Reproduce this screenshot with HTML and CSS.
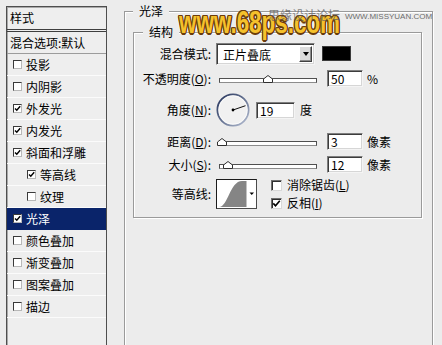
FILE: index.html
```html
<!DOCTYPE html>
<html lang="zh">
<head>
<meta charset="utf-8">
<title>图层样式 - 光泽</title>
<link rel="stylesheet" href="styles.css">
</head>
<body>
<div class="dialog">
  <div class="styles-panel">
    <div class="panel-title">样式</div>
    <div class="item blend">混合选项:默认</div>
    <div class="item"><span class="cb"></span><span>投影</span></div>
    <div class="item"><span class="cb"></span><span>内阴影</span></div>
    <div class="item"><span class="cb"><svg viewBox="0 0 7 7"><path d="M1 3.4 L2.8 5.3 L6.2 1.2"/></svg></span><span>外发光</span></div>
    <div class="item"><span class="cb"><svg viewBox="0 0 7 7"><path d="M1 3.4 L2.8 5.3 L6.2 1.2"/></svg></span><span>内发光</span></div>
    <div class="item"><span class="cb"><svg viewBox="0 0 7 7"><path d="M1 3.4 L2.8 5.3 L6.2 1.2"/></svg></span><span>斜面和浮雕</span></div>
    <div class="item sub"><span class="cb"><svg viewBox="0 0 7 7"><path d="M1 3.4 L2.8 5.3 L6.2 1.2"/></svg></span><span>等高线</span></div>
    <div class="item sub"><span class="cb"></span><span>纹理</span></div>
    <div class="item active"><span class="cb"><svg viewBox="0 0 7 7"><path d="M1 3.4 L2.8 5.3 L6.2 1.2"/></svg></span><span>光泽</span></div>
    <div class="item"><span class="cb"></span><span>颜色叠加</span></div>
    <div class="item"><span class="cb"></span><span>渐变叠加</span></div>
    <div class="item"><span class="cb"></span><span>图案叠加</span></div>
    <div class="item"><span class="cb"></span><span>描边</span></div>
  </div>

  <div class="group outer">
    <span class="caption">光泽</span>
    <div class="group inner">
      <span class="caption">结构</span>
      <div class="form">
        <div class="row r-blend">
          <label class="lbl">混合模式:</label>
          <div class="select sunken"><span class="sel-text">正片叠底</span><span class="sel-btn"><span class="arrow"></span></span></div>
          <span class="swatch"></span>
        </div>
        <div class="row r-field">
          <label class="lbl">不透明度(<u>O</u>):</label>
          <div class="slider"><span class="track"></span><svg class="thumb" style="left:50%" viewBox="0 0 10 8"><path d="M0.5 7.5 L0.5 4 L5 0.5 L9.5 4 L9.5 7.5 Z"/></svg></div>
          <span class="input sunken">50</span>
          <span class="unit">%</span>
        </div>
        <div class="row r-angle">
          <label class="lbl">角度(<u>N</u>):</label>
          <svg class="dial" width="34" height="34" viewBox="0 0 34 34">
            <defs>
              <linearGradient id="ring" x1="0" y1="0" x2="1" y2="1">
                <stop offset="0" stop-color="#24325a"/>
                <stop offset="0.55" stop-color="#6d7a98"/>
                <stop offset="1" stop-color="#b9c2d6"/>
              </linearGradient>
            </defs>
            <circle cx="17" cy="17" r="15.6" fill="#f1f1f1" stroke="url(#ring)" stroke-width="1.8"/>
            <circle cx="17" cy="17" r="14.2" fill="none" stroke="#ffffff" stroke-width="0.8" opacity="0.8"/>
            <line x1="17" y1="17" x2="29.5" y2="12.7" stroke="#111" stroke-width="1"/>
            <circle cx="17" cy="17" r="1.4" fill="#000"/>
          </svg>
          <span class="input sunken angle-input">19</span>
          <span class="unit angle-unit">度</span>
        </div>
        <div class="row r-field">
          <label class="lbl">距离(<u>D</u>):</label>
          <div class="slider"><span class="track"></span><svg class="thumb" style="left:3px" viewBox="0 0 10 8"><path d="M0.5 7.5 L0.5 4 L5 0.5 L9.5 4 L9.5 7.5 Z"/></svg></div>
          <span class="input sunken">3</span>
          <span class="unit">像素</span>
        </div>
        <div class="row r-field">
          <label class="lbl">大小(<u>S</u>):</label>
          <div class="slider"><span class="track"></span><svg class="thumb" style="left:9px" viewBox="0 0 10 8"><path d="M0.5 7.5 L0.5 4 L5 0.5 L9.5 4 L9.5 7.5 Z"/></svg></div>
          <span class="input sunken">12</span>
          <span class="unit">像素</span>
        </div>
        <div class="row r-contour">
          <label class="lbl">等高线:</label>
          <div class="contour">
            <svg width="39" height="28" viewBox="0 0 39 28">
              <path d="M2 27 C 11 27, 13 1, 25 1 L 29.5 1 L 29.5 27 Z" fill="#858585"/>
              <path d="M32.5 12.5 L37 12.5 L34.75 15 Z" fill="#000"/>
            </svg>
          </div>
          <div class="checks">
            <div class="check"><span class="cb2"></span><span class="check-text">消除锯齿(<u>L</u>)</span></div>
            <div class="check"><span class="cb2"><svg viewBox="0 0 9 9"><path d="M1.3 4.4 L3.5 6.8 L7.8 1.8"/></svg></span><span class="check-text">反相(<u>I</u>)</span></div>
          </div>
        </div>
      </div>
    </div>
  </div>
</div>

<div class="wm-68">www.68ps.com</div>
<div class="wm-cn">思缘设计论坛</div>
<div class="wm-url">WWW.MISSYUAN.COM</div>
</body>
</html>
```

FILE: styles.css
```css
* { box-sizing: border-box; }

html, body { margin: 0; }

body {
  width: 442px;
  height: 345px;
  overflow: hidden;
  position: relative;
  background: #ececec;
  color: #000;
  font: 12px/1 "Noto Sans CJK SC", "Noto Sans", sans-serif;
}

.dialog {
  display: flex;
  align-items: flex-start;
  padding: 6px 0 0 6px;
}

/* ---------- left style list ---------- */
.styles-panel {
  flex: none;
  width: 101px;
  height: 339px;
  border: 1px solid #4e4e4e;
  border-bottom: none;
  background: #eeeeee;
  box-shadow: inset 1px 1px 0 #a9a9a9;
}

.panel-title {
  height: 25px;
  line-height: 22px;
  padding-left: 3px;
  border-bottom: 3px double #3e3e3e;
}

.item {
  height: 22px;
  display: flex;
  align-items: center;
  gap: 4px;
  padding-left: 6px;
  border-bottom: 1px solid #fbfbfb;
  white-space: nowrap;
}

.item.blend {
  padding-left: 3px;
  border-bottom-color: #9c9c9c;
}

.item.sub { padding-left: 20px; }

.item.active {
  background: #0a246a;
  color: #fff;
  border-bottom-color: #0a246a;
}

.cb {
  flex: none;
  width: 9px;
  height: 9px;
  background: #fff;
  border: 1px solid;
  border-color: #3a3a3a #b8b8b8 #b8b8b8 #3a3a3a;
  display: flex;
}

.cb svg {
  width: 7px;
  height: 7px;
  fill: none;
  stroke: #000;
  stroke-width: 1.4;
}

/* ---------- group boxes ---------- */
.group {
  position: relative;
  border: 1px solid #9a9a9a;
  box-shadow: inset 1px 1px 0 #fff, 1px 1px 0 #fff;
}

.group.outer {
  flex: none;
  width: 309px;
  height: 335px;
  margin: 5px 0 0 17px;
  padding: 20px 0 0 8px;
}

.group.inner {
  width: 289px;
  height: 186px;
}

.caption {
  position: absolute;
  top: -8px;
  left: 8px;
  padding: 0 6px;
  line-height: 14px;
  background: #ececec;
}

.group.inner .caption { left: 9px; }

/* ---------- form ---------- */
.form {
  display: flex;
  flex-direction: column;
  gap: 6px;
  padding-top: 10px;
}

.row {
  display: flex;
  align-items: center;
}

.lbl {
  flex: none;
  width: 77px;
  margin-right: 5px;
  text-align: right;
  white-space: nowrap;
}

.r-blend { height: 21px; }
.r-field { height: 17px; }
.r-angle { height: 34px; }
.r-contour { height: 30px; }

.sunken {
  background: #fff;
  border: 1px solid;
  border-color: #7e7e7e #f4f4f4 #f4f4f4 #7e7e7e;
  box-shadow: inset 1px 1px 0 #3c3c3c, inset -1px -1px 0 #d6d6d6;
}

.select {
  width: 99px;
  height: 22px;
  display: flex;
  align-items: stretch;
  padding: 2px;
}

.sel-text {
  flex: 1;
  padding-left: 4px;
  line-height: 18px;
}

.sel-btn {
  flex: none;
  width: 13px;
  background: #dcdcdc;
  border: 1px solid;
  border-color: #fff #404040 #404040 #fff;
  box-shadow: inset -1px -1px 0 #8a8a8a;
  display: flex;
  align-items: center;
  justify-content: center;
}

.arrow {
  width: 0;
  height: 0;
  border-left: 3.5px solid transparent;
  border-right: 3.5px solid transparent;
  border-top: 4px solid #000;
}

.swatch {
  width: 29px;
  height: 15px;
  margin-left: 7px;
  background: #000;
  border: 1px solid #3c3c3c;
}

.slider {
  position: relative;
  flex: none;
  width: 98px;
  height: 17px;
  margin-left: 3px;
}

.track {
  position: absolute;
  left: 0;
  right: 0;
  top: 8px;
  height: 5px;
  background: #fff;
  border: 1px solid #505050;
  border-bottom-color: #8c8c8c;
}

.thumb {
  position: absolute;
  top: 5px;
  width: 10px;
  height: 8px;
  margin-left: -5px;
  overflow: visible;
  fill: #fff;
  stroke: #303030;
  stroke-width: 1;
}

.input {
  flex: none;
  width: 36px;
  height: 17px;
  margin-left: 10px;
  padding-left: 3px;
  line-height: 15px;
}

.unit { margin-left: 4px; }

.dial { flex: none; }

.angle-input {
  width: 39px;
  margin-left: 6px;
}

.angle-unit { margin-left: 5px; }

.contour {
  flex: none;
  width: 41px;
  height: 30px;
  background: #fff;
  border: 1px solid;
  border-color: #1c1c1c #4a4a4a #4a4a4a #1c1c1c;
}

.contour svg { display: block; }

.checks {
  height: 30px;
  margin-left: 14px;
  display: flex;
  flex-direction: column;
  justify-content: space-between;
}

.check {
  height: 12px;
  display: flex;
  align-items: center;
  gap: 5px;
  white-space: nowrap;
}

.check-text { line-height: 12px; }

.cb2 {
  flex: none;
  width: 11px;
  height: 11px;
  background: #fff;
  border: 1px solid;
  border-color: #6e6e6e #d8d8d8 #d8d8d8 #6e6e6e;
  box-shadow: inset 1px 1px 0 #2e2e2e;
  display: flex;
}

.cb2 svg {
  width: 9px;
  height: 9px;
  fill: none;
  stroke: #000;
  stroke-width: 1.6;
}

/* ---------- watermarks ---------- */
.wm-68 {
  position: absolute;
  left: 179px;
  top: 6px;
  font: bold 32px/32px "Liberation Sans", Arial, sans-serif;
  color: #f5c12c;
  transform: scaleX(0.7);
  transform-origin: 0 0;
  white-space: nowrap;
  text-shadow:
    1.5px 0 0 #6a3c0c, -1.5px 0 0 #6a3c0c, 0 1.5px 0 #6a3c0c, 0 -1.5px 0 #6a3c0c,
    1.2px 1.2px 0 #6a3c0c, -1.2px 1.2px 0 #6a3c0c, 1.2px -1.2px 0 #6a3c0c, -1.2px -1.2px 0 #6a3c0c,
    0 0 4px rgba(255, 255, 255, 0.9);
}

.wm-cn {
  position: absolute;
  left: 268px;
  top: 8px;
  font-size: 12px;
  line-height: 14px;
  color: rgba(90, 90, 90, 0.75);
  white-space: nowrap;
}

.wm-url {
  position: absolute;
  left: 345px;
  top: 12px;
  font: 8px/9px "Liberation Sans", Arial, sans-serif;
  color: #6c6c6c;
  white-space: nowrap;
}
```
